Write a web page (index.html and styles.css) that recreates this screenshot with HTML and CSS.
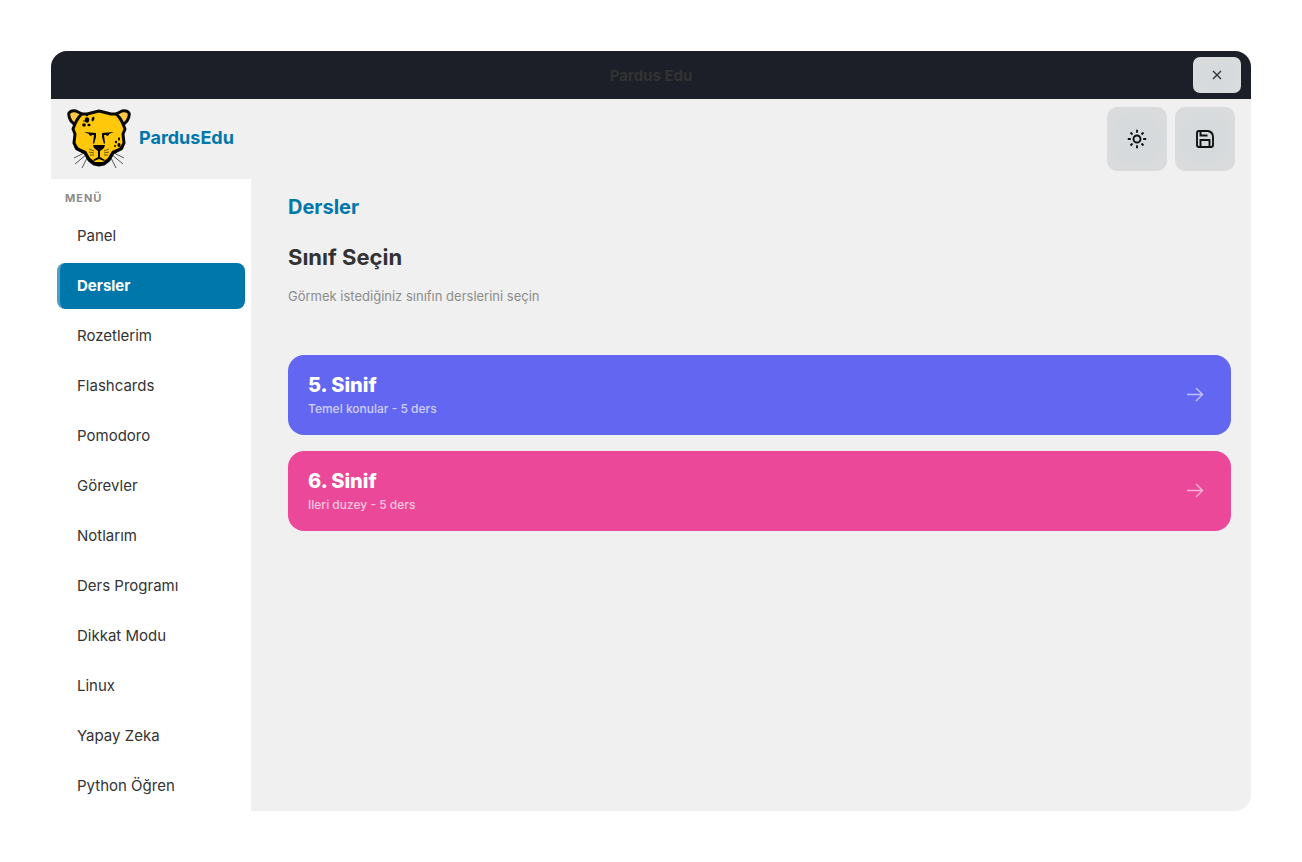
FILE: index.html
```
<!DOCTYPE html>
<html lang="tr">
<head>
  <meta charset="UTF-8">
  <title>Pardus Edu</title>
  <meta name="viewport" content="width=device-width, initial-scale=1">
  <link rel="stylesheet" href="styles.css">
</head>
<body>

<div class="window">
  <div class="titlebar">
    <span class="title">Pardus Edu</span>
    <button class="close" aria-label="Kapat">
      <svg width="16" height="16" viewBox="0 0 16 16"><path d="M4 4l8 8M12 4l-8 8"/></svg>
    </button>
  </div>

  <header class="header">
    <svg class="logo" width="64" height="64" viewBox="0 0 64 64">
      <!-- whiskers -->
      <g fill="none" stroke="#555" stroke-width="1">
        <path d="M19 45L7 51M20 47L8 57M21 49L15 61M45 45L57 51M44 47L56 57M43 49L49 61"/>
      </g>
      <!-- ears and head -->
      <g stroke="#0a0a0a" stroke-width="3" stroke-linejoin="round">
        <path fill="#ffc845" d="M15 7L9 4Q4 3 2 6Q1 9 4 14L8 18Z"/>
        <path fill="#ffc845" d="M49 7L55 4Q60 3 62 6Q63 9 60 14L56 18Z"/>
        <path fill="#ffc80a" d="M32 4L44 7L49 7Q53 10 56 17L58 22L56 27L57 36L54 42L46 46L42 53L37 57L32 58L27 57L22 53L18 46L10 42L7 36L8 27L6 22L8 17Q11 10 15 7L20 7Z"/>
      </g>
      <path d="M6 34L8 42L18 47L22 54L32 59L42 54L46 47L56 42L58 34L55 38L52 41L45 44L41 51L36 55H28L23 51L19 44L12 41L9 38Z"/>
      <!-- eyes and nose -->
      <path d="M17 25L29 26L29 30L27 37L26 36L27 28L25 28L24 29L22 28V27ZM47 25L35 26L35 30L37 37L38 36L37 28L39 28L40 29L42 28V27Z"/>
      <path d="M26 38H38L37 41L33 44V50L38 53L37 54L32 52L27 54L26 53L31 50V44L27 41Z"/>
      <path fill="none" stroke="#0a0a0a" stroke-width="0.6" d="M27 44L22 42M27 46L22 45M27 48L23 48M37 44L42 42M37 46L42 45M37 48L41 48"/>
      <!-- spots -->
      <g>
        <ellipse cx="20" cy="13" rx="2.2" ry="2.7"/>
        <ellipse cx="26" cy="12" rx="1.3" ry="2.3" transform="rotate(20 26 12)"/>
        <circle cx="17" cy="18" r="1.8"/>
        <ellipse cx="22" cy="18" rx="1.6" ry="1.3"/>
        <circle cx="20" cy="8" r="1.2"/>
        <circle cx="17" cy="14" r="0.8"/>
        <ellipse cx="52" cy="32" rx="1" ry="1.8"/>
        <circle cx="49" cy="35" r="1.2"/>
        <ellipse cx="52" cy="38" rx="1.6" ry="1.9"/>
        <circle cx="48" cy="39" r="1"/>
      </g>
    </svg>
    <span class="brand">PardusEdu</span>
    <button class="tool" aria-label="Tema">
      <svg width="20" height="20" viewBox="0 0 20 20">
        <circle cx="10" cy="10" r="3.5"/>
        <path d="M10 .8v3M10 16.200v3M.8 10h3M16.200 10h3M3.500 3.500l2 2M14.500 14.500l2 2M3.500 16.500l2-2M14.500 5.500l2-2"/>
      </svg>
    </button>
    <button class="tool" aria-label="Kaydet">
      <svg width="20" height="20" viewBox="0 0 20 20">
        <path d="M4 2h9q5 1 5 6v8a2 2 0 0 1-2 2H4a2 2 0 0 1-2-2V4a2 2 0 0 1 2-2z"/>
        <path d="M5.500 18v-7h9v7M5.500 2.500v4h7"/>
      </svg>
    </button>
  </header>

  <div class="body">
    <nav class="sidebar">
      <div class="menu-label">MENÜ</div>
      <a href="#">Panel</a>
      <a href="#" class="active">Dersler</a>
      <a href="#">Rozetlerim</a>
      <a href="#">Flashcards</a>
      <a href="#">Pomodoro</a>
      <a href="#">Görevler</a>
      <a href="#">Notlarım</a>
      <a href="#">Ders Programı</a>
      <a href="#">Dikkat Modu</a>
      <a href="#">Linux</a>
      <a href="#">Yapay Zeka</a>
      <a href="#">Python Öğren</a>
    </nav>

    <main class="content">
      <h1>Dersler</h1>
      <h2>Sınıf Seçin</h2>
      <p class="hint">Görmek istediğiniz sınıfın derslerini seçin</p>

      <div class="grades">
        <button class="grade grade-5">
          <span class="grade-text">
            <span class="grade-name">5. Sinif</span>
            <span class="grade-info">Temel konular - 5 ders</span>
          </span>
          <svg width="18" height="16" viewBox="0 0 18 16"><path d="M1 7.500h16M10 1l6.500 6.500L10 14"/></svg>
        </button>
        <button class="grade grade-6">
          <span class="grade-text">
            <span class="grade-name">6. Sinif</span>
            <span class="grade-info">Ileri duzey - 5 ders</span>
          </span>
          <svg width="18" height="16" viewBox="0 0 18 16"><path d="M1 7.500h16M10 1l6.500 6.500L10 14"/></svg>
        </button>
      </div>
    </main>
  </div>
</div>

</body>
</html>
```
FILE: styles.css
```
:root {
  --accent: #0077aa;
  --bg: #f0f0f0;
  --bar: #1c1f27;
  --text: #333;
  --muted: #8c8c8c;
}

* {
  box-sizing: border-box;
}

body {
  margin: 0;
  padding: 51px;
  background: #fff;
  color: var(--text);
  font-family: Inter, sans-serif;
}

button {
  border: none;
  padding: 0;
  font-family: inherit;
  cursor: pointer;
}

svg {
  display: block;
}

.window {
  display: flex;
  flex-direction: column;
  min-height: calc(100vh - 102px);
  background: var(--bg);
  border-radius: 16px;
  overflow: hidden;
}

.titlebar {
  display: grid;
  grid-template-columns: 1fr auto 1fr;
  align-items: center;
  height: 48px;
  padding: 0 10px;
  background: var(--bar);
}

.title {
  grid-column: 2;
  font-size: 15px;
  font-weight: 700;
}

.close,
.tool {
  display: flex;
  align-items: center;
  justify-content: center;
  background: radial-gradient(#d3d9dc, #d9dbdc 70%);
}

.close {
  justify-self: end;
  width: 48px;
  height: 36px;
  border-radius: 7px;
}

.close svg {
  fill: none;
  stroke: #333;
  stroke-width: 1.4;
}

.header {
  display: flex;
  align-items: center;
  gap: 8px;
  height: 80px;
  padding: 0 16px;
}

.brand {
  flex: 1;
  color: var(--accent);
  font-size: 18px;
  font-weight: 700;
  line-height: 24px;
  padding-bottom: 2px;
}

.tool {
  width: 60px;
  height: 64px;
  border-radius: 10px;
}

.tool svg {
  fill: none;
  stroke: #111;
  stroke-width: 1.9;
}

.body {
  display: flex;
  flex: 1;
}

.sidebar {
  width: 200px;
  padding: 10px 6px 0;
  background: #fff;
}

.menu-label {
  padding: 0 8px;
  margin-bottom: 6px;
  color: var(--muted);
  font-size: 11px;
  font-weight: 700;
  letter-spacing: 1px;
  line-height: 18px;
}

.sidebar a {
  display: block;
  margin-bottom: 4px;
  padding-left: 17px;
  border-left: 3px solid transparent;
  border-radius: 8px;
  color: var(--text);
  font-size: 15px;
  line-height: 46px;
  text-decoration: none;
}

.sidebar a:last-child {
  margin-bottom: 0;
}

.sidebar .active {
  background: var(--accent);
  border-left-color: rgba(255, 255, 255, 0.3);
  color: #fff;
  font-weight: 700;
}

.content {
  flex: 1;
  padding: 12px 20px 20px 37px;
}

h1 {
  margin: 0 0 20px;
  color: var(--accent);
  font-size: 20px;
  font-weight: 700;
  line-height: 32px;
}

h2 {
  margin: 0 0 16px;
  font-size: 22px;
  font-weight: 700;
  line-height: 28px;
}

.hint {
  margin: 0 0 50px;
  color: var(--muted);
  font-size: 13px;
  line-height: 18px;
}

.grades {
  display: flex;
  flex-direction: column;
  gap: 16px;
}

.grade {
  display: flex;
  align-items: center;
  justify-content: space-between;
  height: 80px;
  padding: 0 27px 0 20px;
  border-radius: 16px;
  color: #fff;
  text-align: left;
}

.grade-5 {
  background: #6366f1;
}

.grade-6 {
  background: #ec4899;
}

.grade-name,
.grade-info {
  display: block;
}

.grade-name {
  font-size: 20px;
  font-weight: 800;
  line-height: 28px;
}

.grade-info {
  color: rgba(255, 255, 255, 0.7);
  font-size: 12px;
  font-weight: 500;
  line-height: 20px;
}

.grade svg {
  fill: none;
  stroke: rgba(255, 255, 255, 0.6);
  stroke-width: 1.4;
}
```
